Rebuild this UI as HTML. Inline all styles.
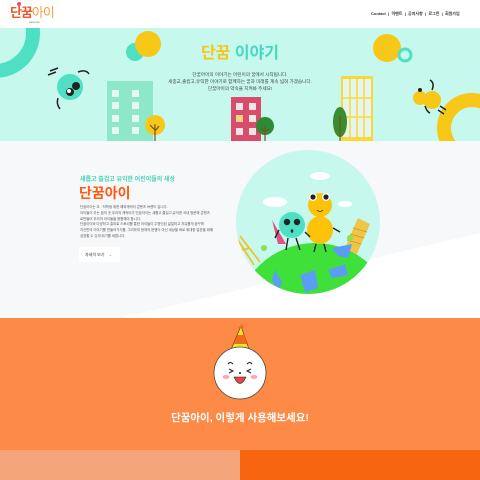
<!DOCTYPE html>
<html><head><meta charset="utf-8"><style>
*{margin:0;padding:0;box-sizing:border-box}
body{width:480px;height:480px;overflow:hidden;position:relative;font-family:"Liberation Sans","Noto Sans CJK KR",sans-serif;background:#fff}
.abs{position:absolute}
</style></head><body>
<!-- header -->
<div class="abs" style="left:0;top:0;width:480px;height:28px;background:#fff"></div>
<div class="abs" style="left:10px;top:6px;font-size:13px;font-weight:bold;color:#f05a28;letter-spacing:-1px;line-height:14px">단꿈<span style="color:#f9a03f;font-weight:normal">아이</span></div>
<div class="abs" style="left:29px;top:22px;font-size:2px;color:#666">DANKKUM I</div>
<div class="abs" style="left:17px;top:2px;width:4px;height:4px;background:#e94a7f;border-radius:50%"></div>
<div class="abs" style="left:371px;top:11px;font-size:4px;color:#333;white-space:nowrap;font-weight:bold">Contact &nbsp;|&nbsp; 이벤트 &nbsp;|&nbsp; 공지사항 &nbsp;|&nbsp; 로그인 &nbsp;|&nbsp; 회원가입</div>

<!-- mint section -->
<div class="abs" style="left:0;top:28px;width:480px;height:113px;background:#c6f8ee;overflow:hidden">
 <svg width="480" height="113" style="position:absolute;left:0;top:0">
  <circle cx="-5" cy="5" r="38" fill="none" stroke="#4fe0c4" stroke-width="14"/>
  <circle cx="135" cy="24" r="9" fill="#4fe0c4"/>
  <circle cx="148" cy="16" r="13" fill="#f7c817"/>
  <circle cx="387" cy="20" r="14" fill="#f7c817"/>
  <circle cx="405" cy="27" r="6" fill="none" stroke="#4fe0c4" stroke-width="3"/>
  <circle cx="472" cy="100" r="28" fill="none" stroke="#f7c817" stroke-width="14"/>
  <circle cx="70" cy="59" r="13" fill="#4fe0c4"/>
  <circle cx="76" cy="58" r="4" fill="#222"/><circle cx="70" cy="64" r="4" fill="#222"/>
  <circle cx="69" cy="63" r="2" fill="#fff"/>
  <path d="M50 43 L58 40 M48 47 L56 44 M78 44 Q86 41 89 46 M58 70 Q56 76 60 81" stroke="#222" stroke-width="1.5" fill="none"/>
  <circle cx="420" cy="70" r="7" fill="#f7c817"/><circle cx="432" cy="72" r="9" fill="#f7c817"/>
  <circle cx="420" cy="62" r="2" fill="#222"/>
  <path d="M430 52 Q435 55 432 62 M425 78 Q427 84 430 85 M440 78 L446 82 M438 82 L444 86" stroke="#222" stroke-width="1.5" fill="none"/>
  <rect x="107" y="53" width="46" height="60" fill="#8ce8c9"/>
  <g fill="#e7f8f4">
   <rect x="112" y="62" width="7" height="7"/><rect x="132" y="62" width="7" height="7"/>
   <rect x="112" y="74" width="7" height="7"/><rect x="132" y="74" width="7" height="7"/>
   <rect x="112" y="87" width="7" height="7"/><rect x="132" y="87" width="7" height="7"/>
   <rect x="112" y="99" width="7" height="7"/><rect x="132" y="99" width="7" height="7"/>
  </g>
  <circle cx="155" cy="97" r="10" fill="#f7c817"/><path d="M155 113 V96 M155 102 L150 97 M155 103 L159 98" stroke="#7a5025" stroke-width="1.2"/>
  <rect x="231" y="69" width="30" height="44" fill="#d94d6c"/>
  <g fill="#f3e5e5"><rect x="236" y="75" width="7" height="7"/><rect x="249" y="75" width="7" height="7"/>
   <rect x="236" y="87" width="7" height="7" fill="#f0d38a"/><rect x="249" y="87" width="7" height="7"/>
   <rect x="236" y="100" width="7" height="7"/><rect x="249" y="100" width="7" height="7"/></g>
  <circle cx="265" cy="98" r="9" fill="#2e8a34"/><path d="M265 113 V98 M265 104 L261 100 M265 104 L269 101" stroke="#7a5025" stroke-width="1.2"/>
  <rect x="341" y="48" width="32" height="65" fill="#f7d93c"/>
  <rect x="343" y="51" width="28" height="58" fill="#e6f5f0"/>
  <path d="M350 51V109M357 51V109M364 51V109M343 70H371M343 89H371" stroke="#f7d93c" stroke-width="1.5"/>
  <ellipse cx="340" cy="94" rx="7" ry="15" fill="#3a8c2d"/><path d="M340 113V88" stroke="#7a5025" stroke-width="1.2"/>
 </svg>
 <div class="abs" style="left:0;width:480px;top:16px;text-align:center;font-size:16px;font-weight:bold;line-height:20px"><span style="color:#f7c61a">단꿈</span> <span style="color:#46d8c1">이야기</span></div>
 <div class="abs" style="left:0;width:480px;top:43px;text-align:center;font-size:4.6px;line-height:7px;color:#444">단꿈아이의 이야기는 어린이의 꿈에서 시작됩니다.<br>세종교,출컵고,유익한 이야기로 함께하는 꿈과 미래를 계속 넓혀 가겠습니다.<br>단꿈아이의 약속을 지켜봐 주세요!</div>
</div>
<div class="abs" style="left:0;top:141px;width:480px;height:177px;background:#f6f8fa"></div>
<svg class="abs" style="left:0;top:141px" width="480" height="177"><polygon points="120,177 480,92 480,177" fill="#fff"/></svg>

<!-- section 2 -->
<div class="abs" style="left:80px;top:174px;font-size:6px;font-weight:bold;color:#44d4b6">새롭고 즐겁고 유익한 어린이들의 세상</div>
<div class="abs" style="left:79px;top:184px;font-size:14px;font-weight:bold;color:#ff5a12;line-height:18px">단꿈아이</div>
<div class="abs" style="left:80px;top:205px;font-size:3.4px;line-height:5.8px;color:#555;width:140px">단꿈아이는 초 · 저학생 위한 해외캐릭터 콘텐츠 브랜드 입니다.<br>아이들이 무는 꿈의 곳 우리의 캐릭터가 단꿈아이는 새롭고,즐겁고,유익한 국내 정문해 콘텐츠<br>로만들어 우리의 아이들을 응원해야 합니다.<br>단꿈아이와 다양하고 흥미로 스토리를 통한 아이들이 주명인된 삶일하고 자유롭게 꿈꾸며<br>자신만의 이야기를 만들어가기를, 그리하여 현재의 문맹이 아닌 세상을 바로 위대한 일꾼을 위해<br>성장할 수 있게 되기를 바랍니다.</div>
<div class="abs" style="left:79px;top:247px;width:41px;height:15px;background:#fff;font-size:4px;color:#333;line-height:15px;padding-left:6px">자세히 보기 &nbsp;&nbsp;→</div>
<svg class="abs" style="left:220px;top:140px" width="260" height="180">
 <defs><clipPath id="c"><circle cx="88" cy="82" r="72"/></clipPath></defs>
 <circle cx="88" cy="82" r="72" fill="#c6f8ee"/>
 <g clip-path="url(#c)">
  <ellipse cx="100" cy="36" rx="10" ry="4" fill="#fff"/><ellipse cx="55" cy="62" rx="12" ry="5" fill="#fff"/><ellipse cx="125" cy="64" rx="7" ry="3" fill="#fff"/>
  <path d="M16 97 L34 125 M20 96 L40 122 M22 110 L30 108" stroke="#f2c326" stroke-width="1.8"/>
  <polygon points="124,110 138,78 150,84 136,116" fill="#eec545"/>
  <path d="M127 100 L141 104 M130 94 L144 98 M133 88 L147 92" stroke="#c99a20" stroke-width="0.8"/>
  <path d="M52 80 L58 104 L66 104 Z" fill="#e2508a"/>
  <circle cx="44" cy="108" r="3" fill="#8de04a"/><circle cx="130" cy="98" r="3" fill="#8de04a"/>
  <ellipse cx="95" cy="178" rx="78" ry="75" fill="#3fe03a"/>
  <path d="M33 128 L40 145 L30 150 Z M55 130 L62 142 L58 152 L52 140 Z M80 135 L95 130 L98 148 L85 152 Z M112 108 L132 104 L128 118 L118 116 Z M108 130 L125 124 L128 135 L112 138 Z" fill="#5b9cf5"/>
  <!-- yellow character -->
  <circle cx="100" cy="65" r="12" fill="#fcc30a"/><ellipse cx="100" cy="90" rx="13" ry="14" fill="#fcc30a"/>
  <circle cx="93" cy="57" r="4" fill="#fff"/><circle cx="106" cy="57" r="4" fill="#fff"/>
  <circle cx="93" cy="57" r="2.6" fill="#222"/><circle cx="106" cy="57" r="2.6" fill="#222"/>
  <path d="M97 70 Q100 73 103 70" stroke="#222" stroke-width="0.8" fill="none"/>
  <path d="M113 88 L120 92 M96 104 L94 112 M104 104 L106 112" stroke="#222" stroke-width="1.4" fill="none"/>
  <!-- teal character -->
  <circle cx="72" cy="85" r="13" fill="#4fe0c4"/>
  <circle cx="67" cy="82" r="3.2" fill="#222"/><circle cx="77" cy="82" r="3.2" fill="#222"/>
  <ellipse cx="72" cy="91" rx="1.3" ry="1.8" fill="#222"/>
  <path d="M59 90 L55 98 M85 92 L90 97 M68 98 L66 110 M76 98 L80 110" stroke="#222" stroke-width="1.4" fill="none"/>
 </g>
</svg>

<!-- orange section -->
<div class="abs" style="left:0;top:318px;width:480px;height:132px;background:#fe8a47"></div>
<svg class="abs" style="left:210px;top:320px" width="60" height="80">
 <polygon points="31,6 20,32 40,32" fill="#f3e12a" stroke="#6b3a1a" stroke-width="0.7"/>
 <path d="M27.5 15 L34.5 15 L37 24 L24 24Z" fill="#f26b1d"/>
 <path d="M28 8 L34 8 L32 4 Z" fill="#f26b1d"/>
 <path d="M18 67 Q30 75 42 67 L38 73 Q30 77 22 73Z" fill="#e3e829"/>
 <circle cx="30" cy="53" r="26" fill="#fff" stroke="#444" stroke-width="0.8"/>
 <path d="M18 44 Q20 41 23 44 M37 44 Q40 41 42 44 M19 49 L23 51 L19 53 M41 49 L37 51 L41 53" stroke="#222" stroke-width="1" fill="none"/>
 <circle cx="30" cy="53" r="1" fill="#222"/>
 <ellipse cx="16" cy="57" rx="3.5" ry="2" fill="#f9a7b5"/><ellipse cx="44" cy="57" rx="3.5" ry="2" fill="#f9a7b5"/>
 <path d="M24 57 Q30 70 36 57 Z" fill="#e84545" stroke="#222" stroke-width="0.6"/>
</svg>
<div class="abs" style="left:0;width:480px;top:410px;text-align:center;color:#fff;font-size:10.5px;font-weight:bold">단꿈아이, 이렇게 사용해보세요!</div>
<div class="abs" style="left:0;top:450px;width:240px;height:30px;background:#f5a57a"></div>
<div class="abs" style="left:240px;top:450px;width:240px;height:30px;background:#f76511"></div>
</body></html>
